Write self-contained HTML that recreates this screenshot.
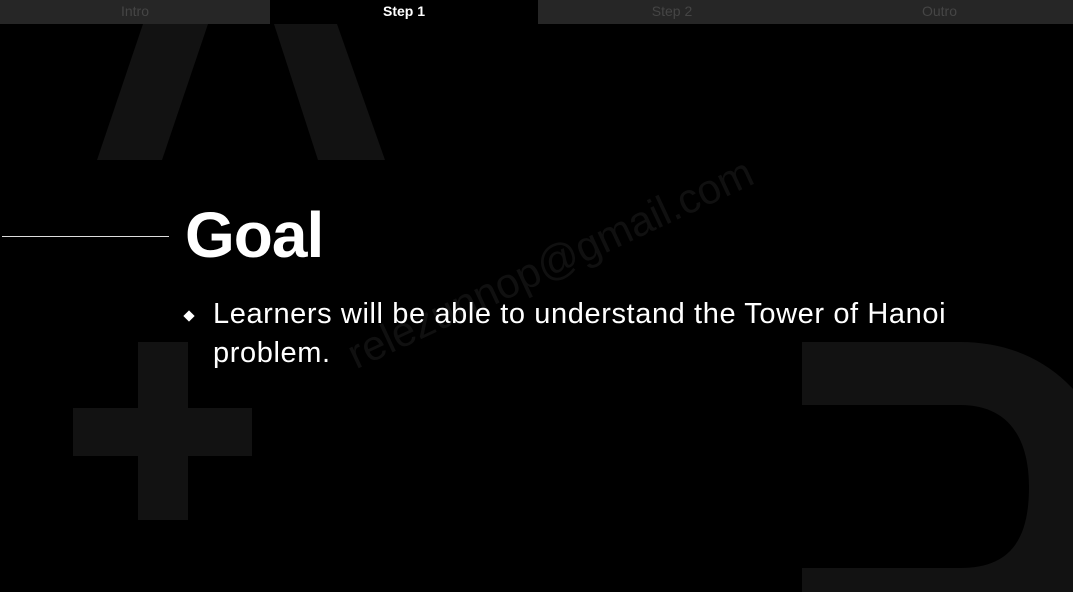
<!DOCTYPE html>
<html><head><style>
html,body{margin:0;padding:0;background:#000;width:1073px;height:592px;overflow:hidden;position:relative;font-family:"Liberation Sans",sans-serif}
.tabs{position:absolute;top:0;left:0;width:1073px;height:24px;display:flex}
.tab{height:24px;line-height:22px;text-align:center;font-size:14px;color:#454545;background:#262626}
.tab.a{background:#000;color:#fff;font-weight:bold}
svg{position:absolute;top:0;left:0}
.goal{position:absolute;left:185px;top:198px;font-size:64px;font-weight:bold;color:#fff;letter-spacing:-1px}
.line{position:absolute;left:2px;top:236px;width:167px;height:1px;background:#ddd}
.txt{position:absolute;left:213px;top:295px;width:820px;font-size:29px;line-height:39px;color:#fff;letter-spacing:0.6px}
.bul{position:absolute;left:185px;top:312px;width:8px;height:8px;background:#fff;transform:rotate(45deg)}
.wm{position:absolute;left:340px;top:335px;font-size:42px;color:#101010;transform:rotate(-25deg);transform-origin:left top;white-space:nowrap}
</style></head><body>
<svg width="1073" height="592">
<g fill="#121212">
<polygon points="97,160 162,160 208,24 143,24"/>
<polygon points="274,24 337,24 385,160 318,160"/>
<rect x="138" y="342" width="50" height="178"/>
<rect x="73" y="408" width="179" height="48"/>
<path d="M802,342 L960,342 C1060,342 1110,420 1110,480 L1110,592 L802,592 Z M802,405 L960,405 C1010,405 1029,440 1029,487 C1029,540 1010,568 960,568 L802,568 Z" fill-rule="evenodd"/>
</g>
</svg>
<div class="wm">relezunnop@gmail.com</div>
<div class="tabs">
<div class="tab" style="width:270px">Intro</div>
<div class="tab a" style="width:268px">Step 1</div>
<div class="tab" style="width:268px">Step 2</div>
<div class="tab" style="width:267px">Outro</div>
</div>
<div class="line"></div>
<div class="goal">Goal</div>
<div class="bul"></div>
<div class="txt">Learners will be able to understand the Tower of Hanoi problem.</div>
</body></html>
